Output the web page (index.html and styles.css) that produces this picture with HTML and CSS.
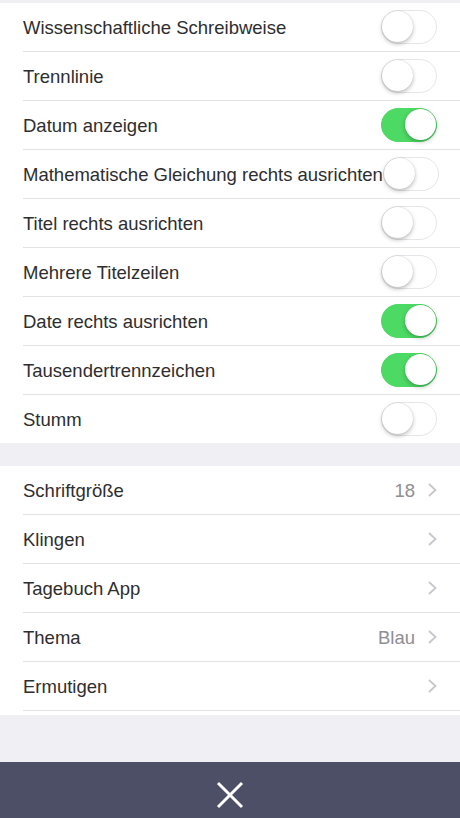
FILE: index.html
```html
<!DOCTYPE html>
<html lang="de">
<head>
    <meta charset="UTF-8">
    <meta name="viewport" content="width=device-width, initial-scale=1.0">
    <title>Einstellungen</title>
    <link rel="stylesheet" href="styles.css">
</head>
<body>
    <div class="page">
        <div class="gap-top"></div>

        <!-- switches -->
        <div class="group">
            <div class="row"><span class="label">Wissenschaftliche Schreibweise</span><span class="switch"></span></div>
            <div class="row"><span class="label">Trennlinie</span><span class="switch"></span></div>
            <div class="row"><span class="label">Datum anzeigen</span><span class="switch on"></span></div>
            <div class="row"><span class="label">Mathematische Gleichung rechts ausrichten</span><span class="switch"></span></div>
            <div class="row"><span class="label">Titel rechts ausrichten</span><span class="switch"></span></div>
            <div class="row"><span class="label">Mehrere Titelzeilen</span><span class="switch"></span></div>
            <div class="row"><span class="label">Date rechts ausrichten</span><span class="switch on"></span></div>
            <div class="row"><span class="label">Tausendertrennzeichen</span><span class="switch on"></span></div>
            <div class="row last"><span class="label">Stumm</span><span class="switch"></span></div>
        </div>

        <div class="gap-mid"></div>

        <!-- links -->
        <div class="group group-links">
            <div class="row"><span class="label">Schriftgröße</span><span class="value">18</span><svg class="chevron" viewBox="0 0 9 14"><polyline points="1,1 7.5,7 1,13"/></svg></div>
            <div class="row"><span class="label">Klingen</span><svg class="chevron" viewBox="0 0 9 14"><polyline points="1,1 7.5,7 1,13"/></svg></div>
            <div class="row"><span class="label">Tagebuch App</span><svg class="chevron" viewBox="0 0 9 14"><polyline points="1,1 7.5,7 1,13"/></svg></div>
            <div class="row"><span class="label">Thema</span><span class="value">Blau</span><svg class="chevron" viewBox="0 0 9 14"><polyline points="1,1 7.5,7 1,13"/></svg></div>
            <div class="row"><span class="label">Ermutigen</span><svg class="chevron" viewBox="0 0 9 14"><polyline points="1,1 7.5,7 1,13"/></svg></div>
        </div>

        <div class="filler"></div>

        <div class="footer">
            <svg class="close" viewBox="0 0 28 28"><line x1="2" y1="2" x2="26" y2="26"/><line x1="26" y1="2" x2="2" y2="26"/></svg>
        </div>
    </div>
</body>
</html>
```

FILE: styles.css
```css
html, body {
    margin: 0;
    padding: 0;
    width: 460px;
    height: 818px;
}

body {
    font-family: "Liberation Sans", Arial, sans-serif;
    background-color: #efeff4;
    color: #2e2e2e;
}

.page {
    display: flex;
    flex-direction: column;
    height: 818px;
}

.gap-top {
    height: 3px;
}

.gap-mid {
    height: 23px;
}

.group {
    background-color: #ffffff;
}

.group-links {
    padding-bottom: 4px;
}

.row {
    display: flex;
    align-items: center;
    height: 48px;
    margin-left: 23px;
    padding-right: 23px;
    border-bottom: 1px solid #e3e3e6;
}

.row.last {
    border-bottom: none;
}

.label {
    flex: 1;
    font-size: 18.5px;
    padding-top: 2px;
    white-space: nowrap;
}

.value {
    font-size: 18.5px;
    padding-top: 2px;
    color: #8e8e93;
    margin-right: 13px;
}

.chevron {
    width: 9px;
    height: 14px;
    fill: none;
    stroke: #c7c7cc;
    stroke-width: 1.8;
}

.switch {
    position: relative;
    flex: none;
    width: 56px;
    height: 34px;
    box-sizing: border-box;
    border: 1.5px solid #e6e6ea;
    border-radius: 17px;
    background-color: #ffffff;
}

.switch::after {
    content: "";
    position: absolute;
    top: 0;
    left: 0;
    width: 31px;
    height: 31px;
    border-radius: 50%;
    background-color: #ffffff;
    box-shadow: 0 2px 4px rgba(0, 0, 0, 0.25), 0 0 1px rgba(0, 0, 0, 0.2);
}

.switch.on {
    background-color: #4cd964;
    border-color: #4cd964;
}

.switch.on::after {
    left: auto;
    right: 0;
}

.filler {
    flex: 1;
}

.footer {
    height: 56px;
    box-sizing: border-box;
    padding-top: 10px;
    background-color: #4c4f66;
    display: flex;
    align-items: center;
    justify-content: center;
}

.close {
    width: 28px;
    height: 28px;
    stroke: #ffffff;
    stroke-width: 3;
}
```
